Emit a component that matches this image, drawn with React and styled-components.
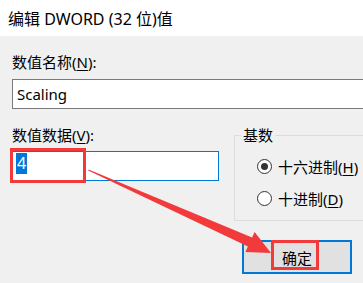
import React from "react";
import styled, { createGlobalStyle } from "styled-components";

const GlobalStyle = createGlobalStyle`
  html, body {
    margin: 0;
    padding: 0;
    background: #f0f0f0;
  }
  body {
    font-family: "Noto Sans", "Noto Sans CJK SC", sans-serif;
    color: #000;
  }
`;

const Dialog = styled.div`
  position: relative;
  width: 363px;
  height: 283px;
  overflow: hidden;
  background: #f0f0f0;
`;

const TitleBar = styled.div`
  height: 36px;
  background: #fff;
  display: flex;
  align-items: center;
  padding-left: 8px;
  font-size: 16px;
  white-space: nowrap;
`;

const Body = styled.div`
  padding-left: 12px;
`;

const Label = styled.div`
  font-size: 15px;
  line-height: 20px;
  height: 20px;
  margin-top: ${(p) => p.$top || 0}px;
  white-space: nowrap;
`;

const Key = styled.span`
  text-decoration: underline;
  text-underline-offset: 2px;
`;

const TextBox = styled.div`
  box-sizing: border-box;
  height: 30px;
  width: ${(p) => p.$width}px;
  margin-top: ${(p) => p.$top}px;
  background: #fff;
  border: 1px solid ${(p) => (p.$focused ? "#0078d7" : "#7a7a7a")};
  display: flex;
  align-items: ${(p) => (p.$focused ? "flex-start" : "center")};
  padding: ${(p) => (p.$focused ? "1px 0 0 3px" : "0 0 0 4px")};
  font-size: 15px;
  white-space: nowrap;
`;

const Selected = styled.span`
  background: #0078d7;
  color: #fff;
  font-size: 16px;
  line-height: 21px;
  height: 21px;
  padding: 0 1px;
`;

const Row = styled.div`
  display: grid;
  grid-template-columns: 207px 200px;
  column-gap: 15px;
  margin-top: 16px;
`;

const Column = styled.div`
  display: flex;
  flex-direction: column;
  align-items: flex-start;
`;

const Group = styled.fieldset`
  margin: 0;
  padding: 11px 0 12px 6px;
  border: 1px solid #dcdcdc;
  width: 160px;
  box-sizing: border-box;
`;

const Legend = styled.legend`
  padding: 0 2px;
  font-size: 15px;
  line-height: 20px;
`;

const RadioList = styled.div`
  display: flex;
  flex-direction: column;
  gap: 12px;
  padding-left: 16px;
`;

const RadioRow = styled.div`
  display: flex;
  align-items: center;
  gap: 6px;
  height: 20px;
  font-size: 15px;
  white-space: nowrap;
`;

const RadioDot = styled.span`
  position: relative;
  box-sizing: border-box;
  width: 15px;
  height: 15px;
  border-radius: 50%;
  border: 1px solid #333;
  background: #fff;
  &::after {
    content: "";
    display: ${(p) => (p.$checked ? "block" : "none")};
    position: absolute;
    left: 3px;
    top: 3px;
    width: 7px;
    height: 7px;
    border-radius: 50%;
    background: #333;
  }
`;

const OkButton = styled.div`
  box-sizing: border-box;
  width: 110px;
  height: 34px;
  margin: 19px 0 0 8px;
  border: 2px solid #0078d7;
  background: #e1e1e1;
  display: flex;
  align-items: center;
  justify-content: center;
  font-size: 15px;
`;

const Mark = styled.div`
  position: absolute;
  box-sizing: border-box;
  border: 3px solid #f33a3a;
  left: ${(p) => p.$x}px;
  top: ${(p) => p.$y}px;
  width: ${(p) => p.$w}px;
  height: ${(p) => p.$h}px;
`;

const ArrowLayer = styled.svg`
  position: absolute;
  left: 0;
  top: 0;
  pointer-events: none;
`;

export default function App() {
  return (
    <Dialog>
      <GlobalStyle />
      <TitleBar>编辑 DWORD (32 位)值</TitleBar>
      <Body>
        <Label $top={16}>
          数值名称(<Key>N</Key>):
        </Label>
        <TextBox $width={380} $top={7}>
          Scaling
        </TextBox>
        <Row>
          <Column>
            <Label>
              数值数据(<Key>V</Key>):
            </Label>
            <TextBox $width={207} $top={6} $focused>
              <Selected>4</Selected>
            </TextBox>
          </Column>
          <Column>
            <Group>
              <Legend>基数</Legend>
              <RadioList>
                <RadioRow>
                  <RadioDot $checked />
                  <span>
                    十六进制(<Key>H</Key>)
                  </span>
                </RadioRow>
                <RadioRow>
                  <RadioDot />
                  <span>
                    十进制(<Key>D</Key>)
                  </span>
                </RadioRow>
              </RadioList>
            </Group>
            <OkButton>确定</OkButton>
          </Column>
        </Row>
      </Body>
      <Mark $x={10} $y={148} $w={76} $h={35} />
      <Mark $x={271} $y={240} $w={48} $h={30} />
      <ArrowLayer width="363" height="283" viewBox="0 0 363 283">
        <polygon
          fill="#f33a3a"
          points="88.6,169.4 252.1,237.5 254.6,232 271,253 245.4,252 247.9,246.5 88.2,170.6"
        />
      </ArrowLayer>
    </Dialog>
  );
}
